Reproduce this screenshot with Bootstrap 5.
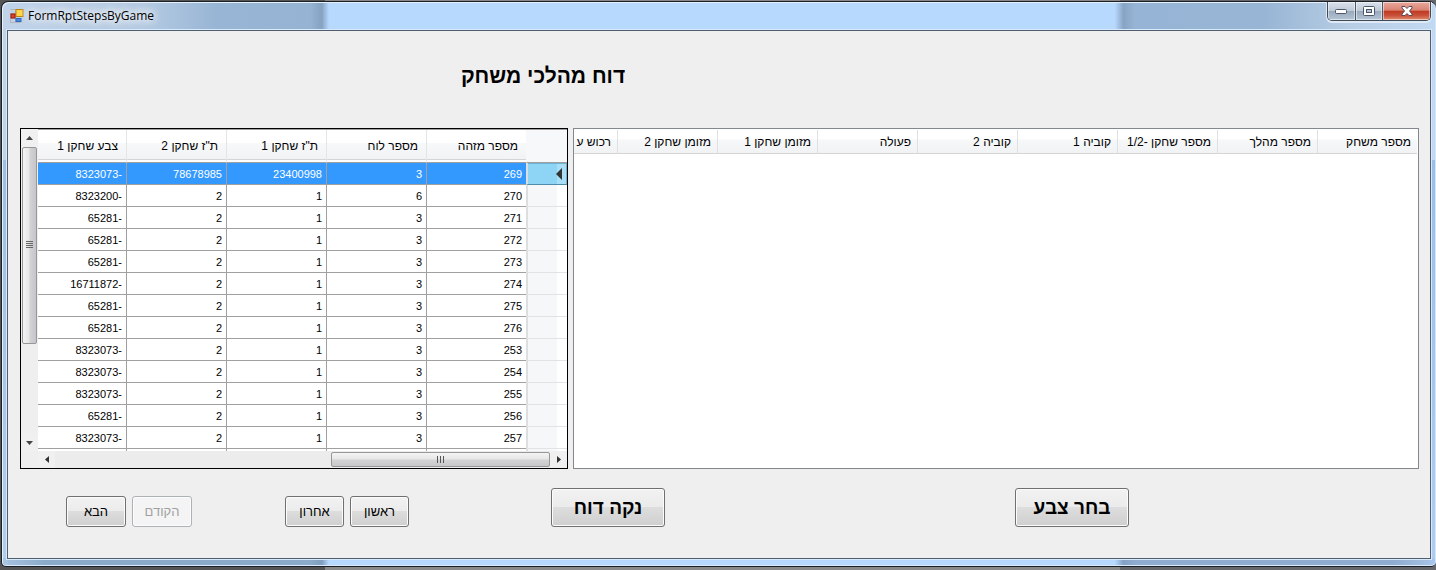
<!DOCTYPE html>
<html lang="he" dir="ltr">
<head>
<meta charset="utf-8">
<meta name="viewport" content="width=device-width, initial-scale=1">
<title>FormRptStepsByGame</title>
<link href="https://cdn.jsdelivr.net/npm/bootstrap@5.3.0/dist/css/bootstrap.min.css" rel="stylesheet">
<style>
  body { background: linear-gradient(to right, #555 0 22.6%, #8a8a8a 22.6% 78%, #66676a 78%); font: 12px/16px "Liberation Sans", sans-serif; color: #000; height: 100vh; padding: 1px 0 3px 1px; overflow: hidden; }
  .win { border: 1px solid #1b1f26; border-right-width: 0; border-radius: 7px 7px 5px 5px; padding: 0 5px 7px;
    box-shadow: inset 1px 1px 0 #e6f1fc, inset 0 -1px 0 #d9eafc, inset -1px 0 0 #d5e6f8;
    background:
      linear-gradient(transparent 0 28%, #8fb4dfaa 28%, #a9c8ea88 100%) left / 6px 100% no-repeat,
      linear-gradient(transparent 0 28%, #8fb9e8cc 28%, #a5c8efaa 100%) right / 6px 100% no-repeat,
      linear-gradient(to right, #a9c3e0 0, #8cabcb 3% 21.5%, #7f9dbd 22.3%, #b7d9fe 22.8% 77.6%, #84a0c4 78.2%, #8fabcf 79% 97%, #a9c6e8 100%) bottom / 100% 8px no-repeat,
      linear-gradient(to right, #c0d3e9 0, #b4cae2 10%, #98b5d5 15%, #96b3d3 21.5%, #86a2c1 22.3%, #b7d9fe 22.8% 77.6%, #88a4c4 78.2%, #96b4d5 79%, #98b5d5 88%, #b7cde4 94%, #c2d9f2 100%); }
  .titlebar { height: 28px; flex-shrink: 0; }
  .app-name { font: 12px/16px "Open Sans", sans-serif; text-shadow: 0 0 8px #fff, 0 0 8px #fff, 0 0 12px #fff; }
  .app-title { padding: 6px 0 0 3px; }
  .caption-btns { border: 1px solid #3f4a57; border-top: 0; border-radius: 0 0 5px 5px; box-shadow: 0 1px 0 1px #dfeaf6; overflow: hidden; height: 19px; }
  .cap { border: 0; border-right: 1px solid #4c5968; padding: 0; height: 18px; display: flex; align-items: center; justify-content: center; box-shadow: inset 0 0 0 1px #ffffff80; background: linear-gradient(#dbe3ec 0, #bfcad7 48%, #98a9bc 50%, #b5c5d5 100%); width: 28px; }
  .cap-max { width: 27px; }
  .cap-close { width: 47px; border-right: 0; background: linear-gradient(#e9aa9d 0, #d98272 46%, #bf3a20 50%, #c9503a 75%, #e08f70 100%); }
  .client { background: #efefef; border: 1px solid #4f5f72; box-shadow: 0 0 0 1px #d9e9fa; padding: 0 11px 31px 12px; min-height: 0; }
  .title-row { display: grid; grid-template-columns: 441fr auto 794fr; align-items: center; height: 97px; padding-bottom: 7px; flex-shrink: 0; }
  .report-title { font: bold 21px/28px "Liberation Sans", sans-serif; margin: 0; }
  .panes { display: grid; grid-template-columns: 548fr 846fr; gap: 5px; grid-template-rows: minmax(0, 1fr); min-height: 0; }
  .pane { background: #fff; overflow: hidden; min-width: 0; }
  .pane-games { border: 1px solid #000; background: #efefef; }
  .pane-steps { border: 1px solid #828790; padding: 1px 1px 0 0; }
  .grid-area { min-width: 0; }
  .grid-view { overflow: hidden; border-top: 1px solid #a0a0a0; background: #fff; min-height: 0; }
  .data { table-layout: fixed; border-collapse: separate; border-spacing: 0; }
  .data th { font-weight: 400; white-space: nowrap; overflow: hidden; padding: 0 8px; background: linear-gradient(#fff 0 40%, #f7f8fa 42%, #f1f2f4 100%); color: #000; }
  .games .c-mark { width: 41px; }
  .games .c-val { width: 100px; }
  .games .c-last { width: 88px; }
  .games { width: 529px; }
  .games thead th { height: 33px; border-left: 1px solid #e4e5e7; border-bottom: 1px solid #a0a0a0; box-shadow: inset 0 -2px 0 #fff, inset 0 -3px 0 #d5d5d5; }
  .games thead th:first-child { background: #f7f8fa; box-shadow: none; border-left-color: #f7f8fa; }
  .games td { height: 22px; padding: 0 4px; font-size: 11px; border-left: 1px solid #a0a0a0; border-bottom: 1px solid #a0a0a0; }
  .games td:last-child, .games thead th:last-child { border-left: 0; }
  .games tbody th { padding: 0 5px 0 0; border-left: 2px solid #dddee0; border-bottom: 1px solid #e2e3e5; background: linear-gradient(to left, #fff 10px, #f6f7f9 10px); }
  .games .current td { background: #3399ff; color: #fff; }
  .games .current th { background: linear-gradient(to left, #a9dff6 10px, #8dd4f5 10px); border-bottom-color: #4d8cab; box-shadow: inset -1px 1px 0 #6fb3d2; }
  .steps { width: 843px; }
  .steps .c-step { width: 100px; }
  .steps .c-cut { width: 43px; }
  .steps th { height: 24px; border-left: 1px solid #dfe0e2; border-bottom: 1px solid #d5d5d5; padding: 0 6px; }
  .steps th:last-child { border-left: 0; padding-left: 0; }
  .vbar { width: 17px; background: #efefef; margin-bottom: 17px; }
  .hbar { height: 17px; background: #ececec; }
  .arrow { width: 17px; height: 17px; border: 0; padding: 0; background: #f0f0f0; display: flex; align-items: center; justify-content: center; }
  .thumb { border: 1px solid #979797; border-radius: 2px; display: flex; align-items: center; justify-content: center; }
  .vthumb { flex: 196 0 0; margin: 1px 1px 0; background: linear-gradient(to right, #f4f4f4, #e6e6e6 48%, #d2d3d6 52%, #c6c6ca); }
  .vtrack { flex: 91 0 0; }
  .hthumb { flex: 217 0 0; margin: 1px 0; background: linear-gradient(#f4f4f4, #e6e6e6 48%, #d4d4d6 52%, #c8c8cb); }
  .htrack { flex: 277 0 0; }
  .win-btn { border: 1px solid #707070; border-radius: 3px; color: #000; padding: 0; background: linear-gradient(#f2f2f2 0, #ebebeb 48%, #dddddd 50%, #cfcfcf 100%); box-shadow: inset 0 0 0 1px #fcfcfc; font: 13px/16px "Liberation Sans", sans-serif; width: 60px; height: 31px; }
  .win-btn:disabled { background: #f4f4f4; border-color: #adb2b5; color: #a0a0a0; opacity: 1; }
  .narrow-btn { width: 59px; }
  .big-btn { width: 114px; height: 39px; font: bold 19px/24px "Liberation Sans", sans-serif; }
  .pair { display: flex; gap: 6px; }
  .actions { display: grid; grid-template-columns: 46fr auto 93fr auto 142fr auto 350fr auto 290fr; align-items: end; margin-top: 19px; flex-shrink: 0; }
</style>
</head>
<body>
<main class="win d-flex flex-column h-100">
  <header class="titlebar d-flex align-items-start justify-content-between">
    <div class="app-title d-flex align-items-center gap-1">
      <svg width="14" height="16" viewBox="0 -1 14 16" aria-hidden="true"><path d="M.5 4.500h5v5h-5zM5.500 9.500h5v4h-5zM.5.5h5v4M.5 9.500v4h5" fill="none" stroke="#b5b5b5"/><rect x="6" y=".5" width="7" height="7" fill="#ffd54a" stroke="#b98512"/><rect x="1" y="5" width="4" height="4" fill="#d9452c" stroke="#9c1b10"/><rect x="6" y="9.500" width="5" height="3" fill="#4d86e0" stroke="#3468c0"/></svg>
      <span class="app-name">FormRptStepsByGame</span>
    </div>
    <div class="caption-btns d-flex">
      <button class="cap" aria-label="Minimize"><svg width="13" height="6" viewBox="0 -1 13 6"><rect x=".5" y=".5" width="11" height="4" rx="1" fill="#fff" stroke="#4b5666"/></svg></button>
      <button class="cap cap-max" aria-label="Maximize"><svg width="12" height="10" viewBox="0 0 12 10"><rect x=".5" y=".5" width="11" height="9" rx="1" fill="#fff" stroke="#4b5666"/><rect x="3.500" y="3.500" width="5" height="3" fill="#b8c4d4" stroke="#4b5666"/></svg></button>
      <button class="cap cap-close" aria-label="Close"><svg width="12" height="10" viewBox="0 0 12 10"><path d="M1 .5h3l2 2 2-2h3v1.500L8.500 5 11 8v1.500H8l-2-2-2 2H1V8l2.500-3L1 2z" fill="#fff" stroke="#5b4a55"/></svg></button>
    </div>
  </header>

  <section class="client flex-fill d-flex flex-column">
    <div class="title-row"><span></span><h1 class="report-title" dir="rtl">דוח מהלכי משחק</h1></div>

    <div class="panes flex-fill">
      <div class="pane pane-games d-flex">
        <div class="vbar d-flex flex-column flex-shrink-0">
          <button class="arrow" aria-label="למעלה"><svg width="7" height="4"><path d="M0 4 3.500 0 7 4z" fill="#444"/></svg></button>
          <div class="thumb vthumb"><svg width="7" height="8"><path d="M0 .5h7M0 2.500h7M0 4.500h7M0 6.500h7" stroke="#666"/></svg></div>
          <div class="vtrack"></div>
          <button class="arrow" aria-label="למטה"><svg width="7" height="4"><path d="M0 0 3.500 4 7 0z" fill="#444"/></svg></button>
        </div>
        <div class="grid-area d-flex flex-column flex-fill">
          <div class="grid-view flex-fill" dir="rtl">
            <table class="data games">
              <colgroup><col class="c-mark"><col class="c-val" span="4"><col class="c-last"></colgroup>
              <thead><tr><th></th><th>מספר מזהה</th><th>מספר לוח</th><th>ת"ז שחקן 1</th><th>ת"ז שחקן 2</th><th>צבע שחקן 1</th></tr></thead>
              <tbody>
                <tr class="current"><th><svg class="d-block" width="6" height="12"><path d="M6 0v12L0 6z" fill="#333"/></svg></th><td>269</td><td>3</td><td>23400998</td><td>78678985</td><td>-8323073</td></tr>
                <tr><th></th><td>270</td><td>6</td><td>1</td><td>2</td><td>-8323200</td></tr>
                <tr><th></th><td>271</td><td>3</td><td>1</td><td>2</td><td>-65281</td></tr>
                <tr><th></th><td>272</td><td>3</td><td>1</td><td>2</td><td>-65281</td></tr>
                <tr><th></th><td>273</td><td>3</td><td>1</td><td>2</td><td>-65281</td></tr>
                <tr><th></th><td>274</td><td>3</td><td>1</td><td>2</td><td>-16711872</td></tr>
                <tr><th></th><td>275</td><td>3</td><td>1</td><td>2</td><td>-65281</td></tr>
                <tr><th></th><td>276</td><td>3</td><td>1</td><td>2</td><td>-65281</td></tr>
                <tr><th></th><td>253</td><td>3</td><td>1</td><td>2</td><td>-8323073</td></tr>
                <tr><th></th><td>254</td><td>3</td><td>1</td><td>2</td><td>-8323073</td></tr>
                <tr><th></th><td>255</td><td>3</td><td>1</td><td>2</td><td>-8323073</td></tr>
                <tr><th></th><td>256</td><td>3</td><td>1</td><td>2</td><td>-65281</td></tr>
                <tr><th></th><td>257</td><td>3</td><td>1</td><td>2</td><td>-8323073</td></tr>
                <tr><th></th><td></td><td></td><td></td><td></td><td></td></tr>
              </tbody>
            </table>
          </div>
          <div class="hbar d-flex flex-shrink-0">
            <button class="arrow" aria-label="שמאלה"><svg width="4" height="7"><path d="M4 0v7L0 3.500z" fill="#333"/></svg></button>
            <div class="htrack"></div>
            <div class="thumb hthumb"><svg width="8" height="7"><path d="M.5 0v7M3.500 0v7M6.500 0v7" stroke="#555"/></svg></div>
            <button class="arrow" aria-label="ימינה"><svg width="4" height="7"><path d="M0 0v7l4-3.500z" fill="#333"/></svg></button>
          </div>
        </div>
      </div>

      <div class="pane pane-steps" dir="rtl">
        <table class="data steps">
          <colgroup><col class="c-step" span="8"><col class="c-cut"></colgroup>
          <thead><tr><th>מספר משחק</th><th>מספר מהלך</th><th>מספר שחקן -1/2</th><th>קוביה 1</th><th>קוביה 2</th><th>פעולה</th><th>מזומן שחקן 1</th><th>מזומן שחקן 2</th><th>רכוש ע</th></tr></thead>
        </table>
      </div>
    </div>

    <div class="actions">
      <span></span>
      <div class="pair"><button class="win-btn">הבא</button><button class="win-btn" disabled>הקודם</button></div>
      <span></span>
      <div class="pair"><button class="win-btn narrow-btn">אחרון</button><button class="win-btn narrow-btn">ראשון</button></div>
      <span></span>
      <button class="win-btn big-btn">נקה דוח</button>
      <span></span>
      <button class="win-btn big-btn">בחר צבע</button>
    </div>
  </section>
</main>
<script src="https://cdn.jsdelivr.net/npm/bootstrap@5.3.0/dist/js/bootstrap.bundle.min.js"></script>
</body>
</html>
